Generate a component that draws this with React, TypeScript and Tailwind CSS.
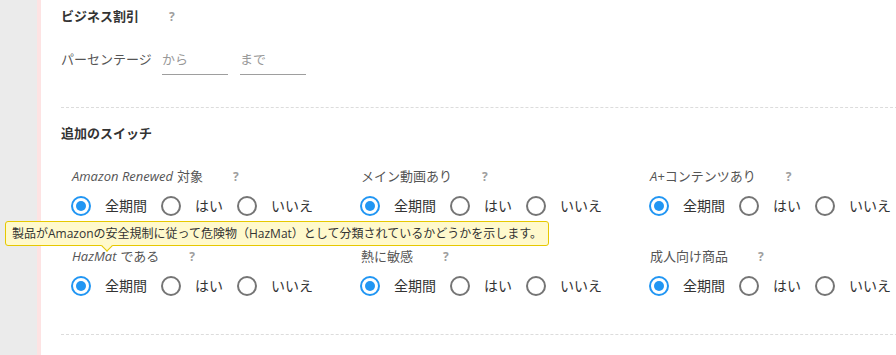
import React from "react";

const FONT = { fontFamily: '"Open Sans","Noto Sans CJK JP",sans-serif' };

function Q({ ml = "ml-[30px]" }: { ml?: string }) {
  return (
    <span className={`${ml} text-[12px] font-bold text-[#9e9e9e] leading-none`}>?</span>
  );
}

function Radio({ checked, label }: { checked?: boolean; label: string }) {
  return (
    <div className="flex items-center">
      <span
        className={`w-[20px] h-[20px] rounded-full border-2 flex items-center justify-center shrink-0 ${
          checked ? "border-[#2196f3]" : "border-[#757575]"
        }`}
      >
        {checked && <span className="w-[10px] h-[10px] rounded-full bg-[#2196f3]" />}
      </span>
      <span className="ml-[14px] mr-[14px] text-[14px] leading-[20px] text-[#333]">{label}</span>
    </div>
  );
}

function Item({ italic, rest, space = true }: { italic?: string; rest: string; space?: boolean }) {
  return (
    <div className="flex flex-col">
      <div className="h-[20px] flex items-center pl-[1px] text-[13px] text-[#555]">
        {italic && <i className={space ? "mr-[4px]" : ""}>{italic}</i>}
        <span>{rest}</span>
        <Q />
      </div>
      <div className="mt-[9px] flex items-center">
        <Radio checked label="全期間" />
        <Radio label="はい" />
        <Radio label="いいえ" />
      </div>
    </div>
  );
}

export default function App() {
  return (
    <div className="relative w-[896px] h-[355px] overflow-hidden bg-white flex" style={FONT}>
      <div className="w-[37px] bg-[#ebebeb] shrink-0" />
      <div className="w-[4px] bg-[#fde3e3] shrink-0" />
      <div className="flex-1 pl-[20px] pt-[7px]">
        <div className="h-[20px] flex items-center text-[13px] font-bold text-[#333]">
          ビジネス割引
          <Q ml="ml-[30px]" />
        </div>
        <div className="mt-[22px] flex items-start text-[13px]">
          <span className="w-[101px] leading-[20px] text-[#555]">パーセンテージ</span>
          <div className="w-[66px] h-[26px] border-b border-[#9e9e9e] leading-[20px] text-[#999]">から</div>
          <div className="ml-[12px] w-[66px] h-[26px] border-b border-[#9e9e9e] leading-[20px] text-[#999]">まで</div>
        </div>
        <div className="mt-[32px] border-t border-dashed border-[#dcdcdc]" />
        <div className="mt-[16px] h-[20px] flex items-center text-[13px] font-bold text-[#333]">
          追加のスイッチ
        </div>
        <div className="mt-[23px] pl-[10px] grid grid-cols-[289px_289px_289px] gap-y-[31px]">
          <Item italic="Amazon Renewed" rest="対象" />
          <Item rest="メイン動画あり" />
          <Item italic="A+" rest="コンテンツあり" space={false} />
          <Item italic="HazMat" rest="である" />
          <Item rest="熱に敏感" />
          <Item rest="成人向け商品" />
        </div>
        <div className="mt-[38px] border-t border-dashed border-[#dcdcdc]" />
      </div>

      <div className="absolute left-[5px] top-[221px] h-[25px] px-[6px] flex items-center bg-[#fff9cc] border border-[#e6c800] rounded-[3px] text-[12px] text-[#333] whitespace-nowrap">
        製品がAmazonの安全規制に従って危険物（HazMat）として分類されているかどうかを示します。
        <span className="absolute left-[97px] bottom-[-5px] w-[8px] h-[8px] rotate-45 bg-[#fff9cc] border-r border-b border-[#e6c800]" />
      </div>
    </div>
  );
}
